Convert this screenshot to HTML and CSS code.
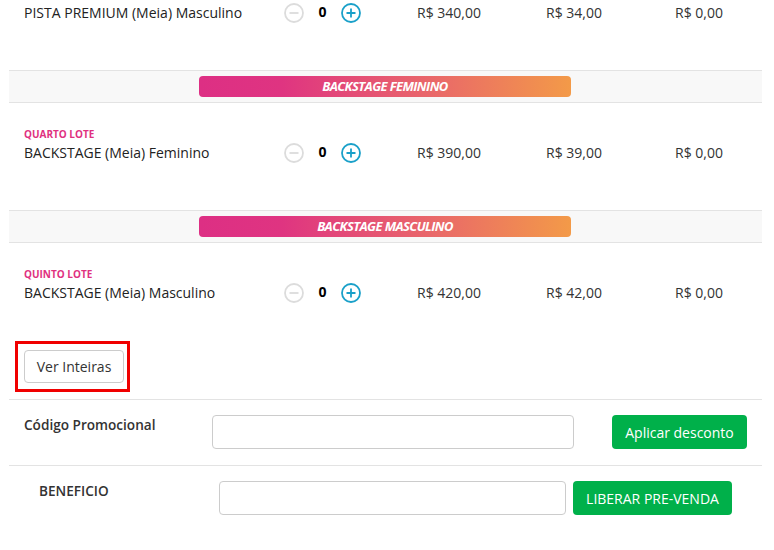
FILE: index.html
```html
<!DOCTYPE html>
<html lang="pt-BR">
<head>
<meta charset="utf-8">
<title>Ingressos</title>
<link rel="stylesheet" href="styles.css">
</head>
<body>
<div class="page">
  <div class="ticket ticket-first">
    <div class="info">
      <div class="name">PISTA PREMIUM (Meia) Masculino</div>
    </div>
    <div class="qty">
      <span class="btn-circle minus"><svg viewBox="0 0 20 20" width="20" height="20"><circle cx="10" cy="10" r="9" fill="none" stroke="currentColor" stroke-width="1.8"/><path d="M5.5 10h9" stroke="currentColor" stroke-width="1.8"/></svg></span>
      <span class="num">0</span>
      <span class="btn-circle plus"><svg viewBox="0 0 20 20" width="20" height="20"><circle cx="10" cy="10" r="9" fill="none" stroke="currentColor" stroke-width="1.8"/><path d="M5.5 10h9M10 5.5v9" stroke="currentColor" stroke-width="1.8"/></svg></span>
    </div>
    <div class="price">R$ 340,00</div>
    <div class="price">R$ 34,00</div>
    <div class="price total">R$ 0,00</div>
  </div>

  <div class="group"><div class="banner">BACKSTAGE FEMININO</div></div>

  <div class="ticket">
    <div class="info">
      <div class="lote">QUARTO LOTE</div>
      <div class="name">BACKSTAGE (Meia) Feminino</div>
    </div>
    <div class="qty">
      <span class="btn-circle minus"><svg viewBox="0 0 20 20" width="20" height="20"><circle cx="10" cy="10" r="9" fill="none" stroke="currentColor" stroke-width="1.8"/><path d="M5.5 10h9" stroke="currentColor" stroke-width="1.8"/></svg></span>
      <span class="num">0</span>
      <span class="btn-circle plus"><svg viewBox="0 0 20 20" width="20" height="20"><circle cx="10" cy="10" r="9" fill="none" stroke="currentColor" stroke-width="1.8"/><path d="M5.5 10h9M10 5.5v9" stroke="currentColor" stroke-width="1.8"/></svg></span>
    </div>
    <div class="price">R$ 390,00</div>
    <div class="price">R$ 39,00</div>
    <div class="price total">R$ 0,00</div>
  </div>

  <div class="group"><div class="banner">BACKSTAGE MASCULINO</div></div>

  <div class="ticket ticket-last">
    <div class="info">
      <div class="lote">QUINTO LOTE</div>
      <div class="name">BACKSTAGE (Meia) Masculino</div>
    </div>
    <div class="qty">
      <span class="btn-circle minus"><svg viewBox="0 0 20 20" width="20" height="20"><circle cx="10" cy="10" r="9" fill="none" stroke="currentColor" stroke-width="1.8"/><path d="M5.5 10h9" stroke="currentColor" stroke-width="1.8"/></svg></span>
      <span class="num">0</span>
      <span class="btn-circle plus"><svg viewBox="0 0 20 20" width="20" height="20"><circle cx="10" cy="10" r="9" fill="none" stroke="currentColor" stroke-width="1.8"/><path d="M5.5 10h9M10 5.5v9" stroke="currentColor" stroke-width="1.8"/></svg></span>
    </div>
    <div class="price">R$ 420,00</div>
    <div class="price">R$ 42,00</div>
    <div class="price total">R$ 0,00</div>
  </div>

  <div class="more">
    <div class="highlight"><button class="btn-outline">Ver Inteiras</button></div>
  </div>

  <div class="form-row promo">
    <div class="label">Código Promocional</div>
    <input class="field" type="text">
    <button class="btn-green">Aplicar desconto</button>
  </div>

  <div class="form-row benefit">
    <div class="label">BENEFICIO</div>
    <input class="field" type="text">
    <button class="btn-green">LIBERAR PRE-VENDA</button>
  </div>
</div>
</body>
</html>
```

FILE: styles.css
```css
* { box-sizing: border-box; }
html, body { margin: 0; padding: 0; background: #fff; }
body {
  font-family: "Open Sans", "Liberation Sans", sans-serif;
  font-size: 14px;
  color: #333;
}
.page {
  margin-left: 9px;
  width: 753px;
}
.ticket {
  display: flex;
  align-items: flex-end;
  padding: 23px 0 46px 15px;
}
.ticket-first { padding-top: 2px; }
.ticket-last { padding-bottom: 0; }
.info { width: 260px; flex: none; }
.lote {
  font-size: 10px;
  font-weight: 700;
  color: #e0317f;
  line-height: 16px;
}
.name {
  font-size: 14px;
  line-height: 22px;
  color: #222;
}
.qty {
  width: 133px;
  flex: none;
  display: flex;
  align-items: center;
  height: 22px;
}
.btn-circle { display: flex; width: 20px; height: 20px; }
.minus { color: #dcdcdc; }
.plus { color: #1aa0c9; }
.num {
  width: 37px;
  text-align: center;
  font-weight: 700;
  color: #000;
  line-height: 22px;
  position: relative;
  top: -1px;
}
.price {
  width: 129px;
  flex: none;
  line-height: 22px;
  color: #333;
}
.price.total { width: auto; flex: 1; }
.group {
  background: #f8f8f8;
  border-top: 1px solid #e3e3e3;
  border-bottom: 1px solid #e3e3e3;
  padding: 5px 0 5px 190px;
}
.banner {
  width: 372px;
  height: 21px;
  border-radius: 4px;
  background: linear-gradient(90deg, #dd2f84 0%, #df3481 22%, #e9676a 62%, #f39a48 100%);
  color: #fff;
  font-size: 13px;
  font-weight: 700;
  font-style: italic;
  letter-spacing: -0.6px;
  text-align: center;
  line-height: 21px;
}
.more {
  padding: 37px 0 7px 6px;
  border-bottom: 1px solid #e3e3e3;
}
.highlight {
  display: inline-block;
  vertical-align: top;
  border: 3px solid #f00000;
  padding: 6px 3px 6px 6px;
}
.btn-outline {
  display: block;
  width: 100px;
  height: 33px;
  border: 1px solid #ccc;
  border-radius: 4px;
  background: #fff;
  font-family: "Open Sans", "Liberation Sans", sans-serif;
  font-size: 14px;
  color: #333;
  padding: 0;
}
.form-row {
  display: flex;
  align-items: flex-start;
  padding: 15px 0 16px;
}
.promo { border-bottom: 1px solid #e3e3e3; }
.label {
  font-weight: 600;
  color: #333;
  font-size: 13.6px;
  line-height: 20px;
}
.field {
  height: 34px;
  border: 1px solid #ccc;
  border-radius: 4px;
  background: #fff;
}
.btn-green {
  height: 34px;
  border: none;
  border-radius: 4px;
  background: #00b04a;
  color: #fff;
  font-family: "Open Sans", "Liberation Sans", sans-serif;
  font-size: 14px;
  padding: 0;
}
.promo .label { width: 203px; padding-left: 15px; }
.promo .field { width: 362px; }
.promo .btn-green { width: 135px; margin-left: 38px; }
.benefit .label { width: 210px; padding-left: 30px; }
.benefit .field { width: 347px; }
.benefit .btn-green { width: 159px; margin-left: 7px; }
```
